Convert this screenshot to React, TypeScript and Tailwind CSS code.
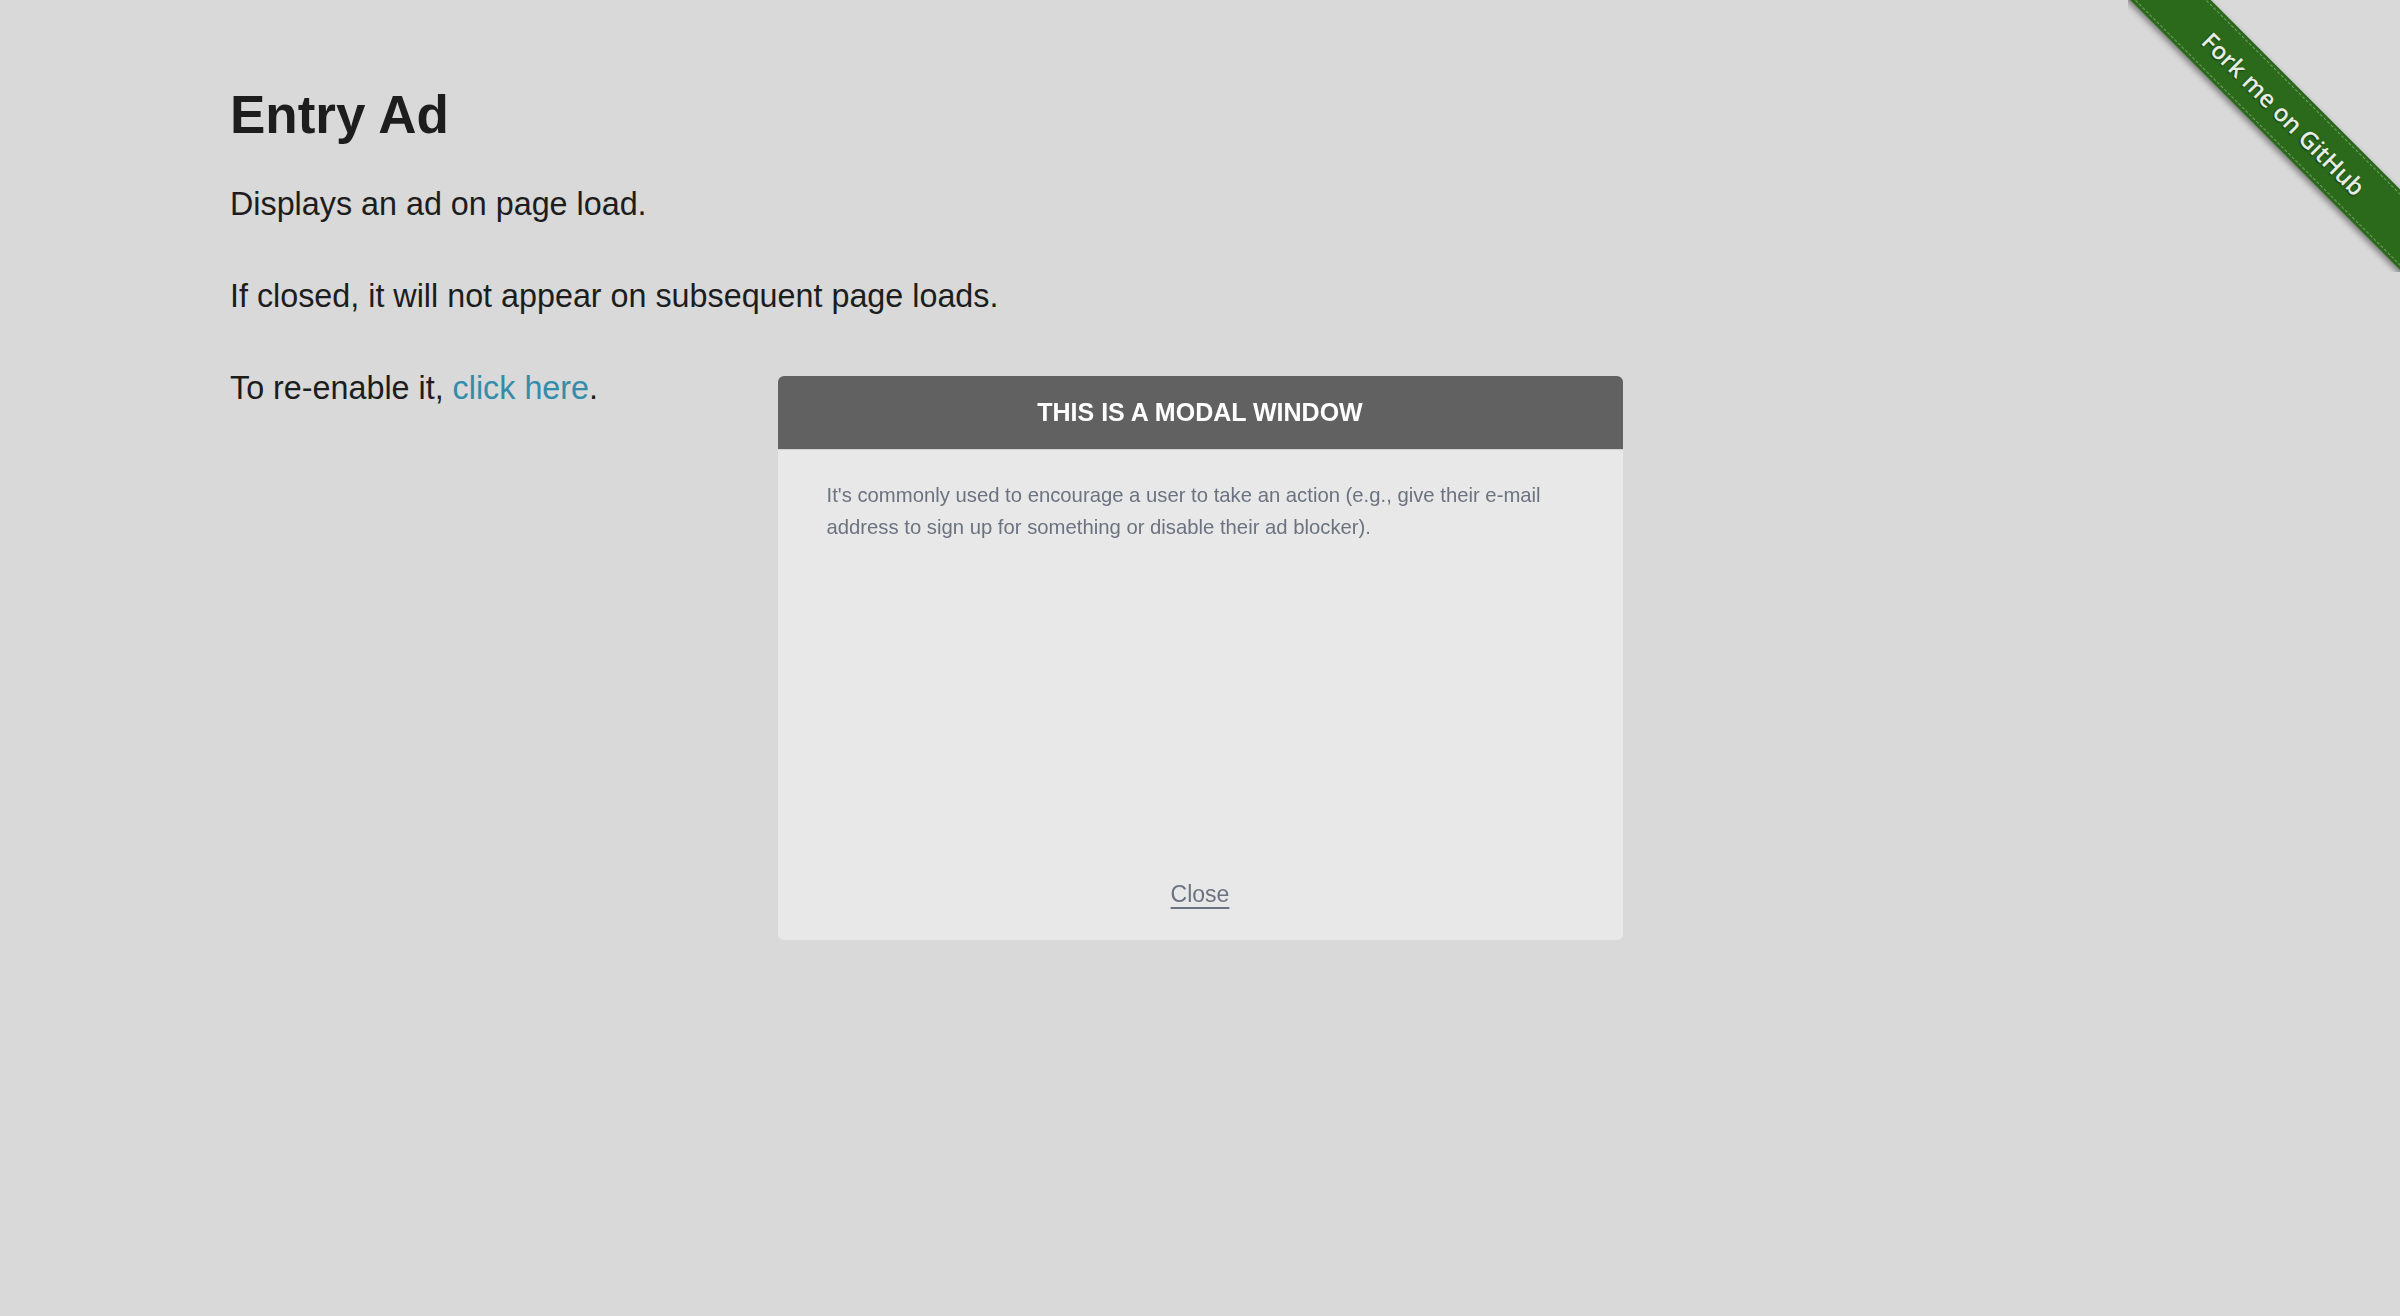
import React from "react";

export default function App() {
  return (
    <div
      className="relative w-full min-h-[1316px] bg-[#d9d9d9] overflow-hidden"
      style={{ fontFamily: '"Liberation Sans", Arial, sans-serif' }}
    >
      <div className="pl-[230px] pt-[85px] text-[#1d1d1d]">
        <h3 className="text-[53px] leading-[60px] font-bold m-0">Entry Ad</h3>
        <p className="mt-[37px] text-[32.3px] leading-[45px]">Displays an ad on page load.</p>
        <p className="mt-[47px] text-[32.3px] leading-[45px]">
          If closed, it will not appear on subsequent page loads.
        </p>
        <p className="mt-[47px] text-[32.3px] leading-[45px]">
          To re-enable it, <a className="text-[#348cab] cursor-pointer">click here</a>.
        </p>
      </div>

      <div className="absolute top-0 right-0 w-[272px] h-[272px] overflow-hidden">
        <div className="absolute left-[-44px] top-[85px] w-[400px] h-[57px] rotate-45 bg-[#2b6a1b] shadow-[0_3px_6px_rgba(0,0,0,0.45)] flex items-center justify-center">
          <div className="absolute left-0 right-0 top-[3px] border-t border-dashed border-[rgba(255,255,255,0.35)]" />
          <div className="absolute left-0 right-0 bottom-[3px] border-t border-dashed border-[rgba(255,255,255,0.35)]" />
          <span
            className="text-[24px] font-semibold text-[#e6eee3] [text-shadow:0_1px_2px_rgba(0,0,0,0.6)]"
            style={{ fontFamily: '"Open Sans", "Noto Sans", sans-serif' }}
          >
            Fork me on GitHub
          </span>
        </div>
      </div>

      <div className="fixed inset-0 flex items-center justify-center">
        <div className="w-[845px] h-[564px] rounded-[6px] bg-[#e8e8e8] overflow-hidden flex flex-col">
          <div className="h-[74px] bg-[#616161] flex items-center justify-center border-b border-[#d0d0d0]">
            <h3 className="text-[25px] font-bold text-white uppercase">This is a modal window</h3>
          </div>
          <div className="flex-1 flex flex-col px-[49px] pt-[29px]">
            <p className="text-[20.3px] leading-[32px] text-[#6b7280]">
              It's commonly used to encourage a user to take an action (e.g., give their e-mail address to sign up for something or disable their ad blocker).
            </p>
          </div>
          <div className="flex justify-center pb-[33px]">
            <p className="text-[23px] leading-[26px] text-[#6b7280] underline underline-offset-[5px] decoration-[2px] cursor-pointer">
              Close
            </p>
          </div>
        </div>
      </div>
    </div>
  );
}
